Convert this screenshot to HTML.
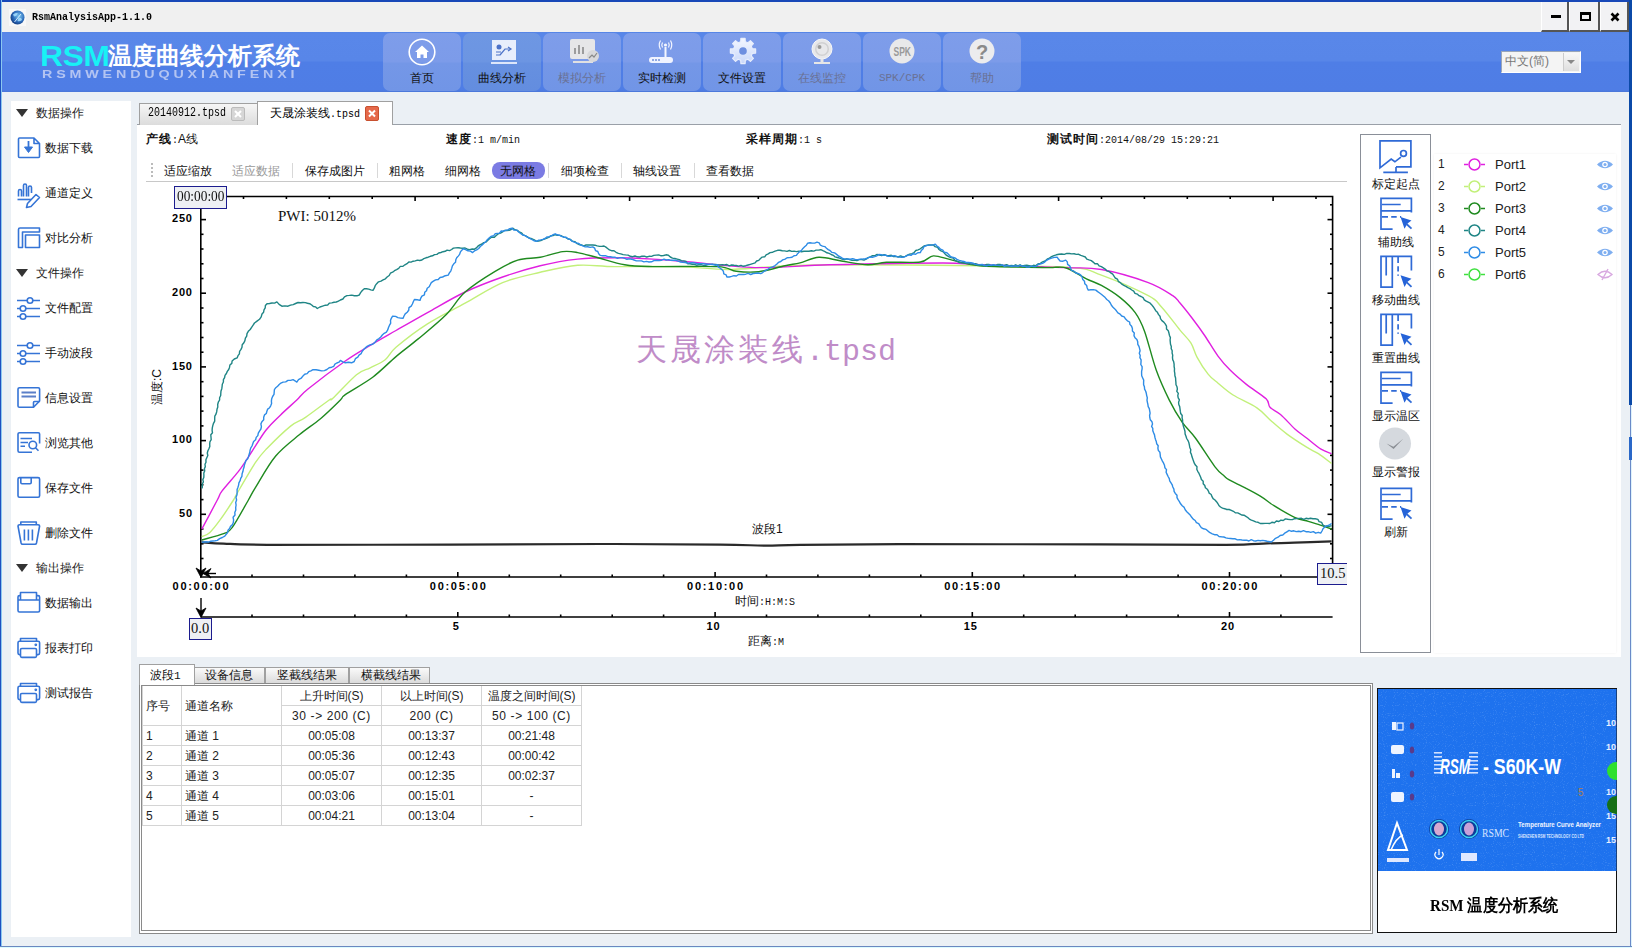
<!DOCTYPE html>
<html><head><meta charset="utf-8">
<style>
*{box-sizing:border-box}
html,body{margin:0;padding:0}
body{width:1632px;height:948px;position:relative;overflow:hidden;background:#ebf0f5;font-family:"Liberation Sans",sans-serif;color:#111}
.a{position:absolute}
.t{position:absolute;white-space:nowrap;line-height:1}
.nav{position:absolute;top:33px;width:78px;height:58px;border-radius:7px;background:linear-gradient(#7e9dea 0,#7c9be9 29px,#7497e7 30px,#7195e6 100%)}
.nav .lb{position:absolute;left:0;right:0;top:39px;text-align:center;font-size:12px;line-height:12px;color:#111}
.nav .lb.dis{color:#6a7194}
.side{position:absolute;left:45px;font-size:12px;line-height:12px;color:#111}
.sh{position:absolute;left:36px;font-size:12px;line-height:12px;color:#222}
.tri{position:absolute;left:16px;width:0;height:0;border-left:6px solid transparent;border-right:6px solid transparent;border-top:8px solid #333}
.tb{position:absolute;top:165px;font-size:12px;line-height:12px;color:#111}
.sep{position:absolute;top:163px;width:1px;height:15px;background:#d8d8d8}
.ax{font-weight:bold;font-size:11px;line-height:11px;color:#000}
.rt{position:absolute;left:1361px;width:69px;text-align:center;font-size:12px;line-height:12px;color:#111}
.pn{position:absolute;left:1438px;font-size:12px;line-height:12px;color:#222}
.pp{position:absolute;left:1495px;font-size:13px;line-height:13px;color:#222}
table.g{position:absolute;left:142px;top:685px;border-collapse:collapse;font-size:12px;color:#222}
table.g td{border:1px solid #d4d4d4;height:20px;padding:0;line-height:18px;text-align:center}
table.g td.l{text-align:left;padding-left:3px}
</style></head><body>

<!-- window frame -->
<div class="a" style="left:0;top:0;width:1632px;height:2px;background:#1848b8"></div>
<div class="a" style="left:0;top:0;width:1px;height:948px;background:#1d50c0"></div><div class="a" style="left:1px;top:0;width:1px;height:948px;background:#8cc8f0"></div>
<div class="a" style="left:1630px;top:0;width:2px;height:948px;background:#dff2fb"></div><div class="a" style="left:1630px;top:0;width:1px;height:948px;background:#6a8ac8"></div><div class="a" style="left:1629px;top:0;width:3px;height:405px;background:#0b4aa8"></div><div class="a" style="left:1629px;top:437px;width:3px;height:23px;background:#2a68c8"></div>
<div class="a" style="left:0;top:946px;width:1632px;height:2px;background:#dcfaff"></div><div class="a" style="left:0;top:946px;width:1632px;height:1px;background:#6a88c0"></div>

<!-- title bar -->
<div class="a" style="left:2px;top:2px;width:1627px;height:30px;background:#f0f0f0"></div>
<svg class="a" style="left:9px;top:9px" width="17" height="17" viewBox="0 0 17 17">
  <rect x="0" y="0" width="17" height="17" fill="#f8f8f8"/>
  <defs><radialGradient id="gl" cx="0.6" cy="0.4" r="0.7"><stop offset="0" stop-color="#7cc6f2"/><stop offset="0.6" stop-color="#2a68b8"/><stop offset="1" stop-color="#0c2f70"/></radialGradient></defs>
  <circle cx="8.5" cy="8.5" r="7" fill="url(#gl)"/>
  <path d="M4,5.5 Q6.5,3 9,4.5 Q8,7 5,7.5Z M9.5,9 Q12.5,8 13,11 Q10.5,13 8.5,12Z" fill="#a8e0ff" opacity="0.85"/>
  <path d="M5.5,13 L12,5" stroke="#e0f4ff" stroke-width="0.9"/>
</svg>
<div class="t" style="left:32px;top:12px;font-family:'Liberation Mono',monospace;font-size:10px;line-height:10px;color:#000;font-weight:bold;transform:scaleY(1.15);transform-origin:0 0">RsmAnalysisApp-1.1.0</div>
<!-- window buttons -->
<div class="a" style="left:1541px;top:2px;width:28px;height:30px;background:#f2f2f4;border-right:2px solid #555;border-bottom:2px solid #555;border-left:1px solid #fff"></div>
<div class="a" style="left:1551px;top:15px;width:10px;height:3px;background:#000"></div>
<div class="a" style="left:1569px;top:2px;width:31px;height:30px;background:#f2f2f4;border-right:2px solid #555;border-bottom:2px solid #555;border-left:1px solid #fff"></div>
<div class="a" style="left:1580px;top:12px;width:11px;height:9px;border:2px solid #000;border-top-width:3px"></div>
<div class="a" style="left:1600px;top:2px;width:29px;height:30px;background:#f2f2f4;border-right:2px solid #555;border-bottom:2px solid #555;border-left:1px solid #fff"></div>
<svg class="a" style="left:1610px;top:12px" width="10" height="10" viewBox="0 0 10 10"><path d="M1.5,1.5 L8.5,8.5 M8.5,1.5 L1.5,8.5" stroke="#000" stroke-width="2.6"/></svg>

<!-- header -->
<div class="a" style="left:2px;top:32px;width:1627px;height:60px;background:linear-gradient(#5685e6 0,#5987e9 2px,#5886e8 29px,#4f7ee6 30px,#4f7de5 58px,#4a76d8 60px)"></div>
<div class="t" style="left:40px;top:42px;font-size:29px;line-height:29px;color:#19f1f5;letter-spacing:-0.5px;font-weight:bold;transform:scaleX(1.1);transform-origin:0 0">RSM</div>
<div class="t" style="left:108px;top:44px;font-size:23.5px;line-height:24px;color:#fff;font-weight:bold">温度曲线分析系统</div>
<div class="t" style="left:42px;top:69px;font-size:11px;line-height:11px;color:#b3c4f2;font-weight:bold;letter-spacing:2.95px;transform:scaleX(1.3);transform-origin:0 0">RSMWENDUQUXIANFENXI</div>

<div class="nav" style="left:383px"><svg class="a" style="left:25px;top:5px" width="28" height="28" viewBox="0 0 28 28"><circle cx="14" cy="14" r="12.8" fill="none" stroke="#fff" stroke-width="1.6"/><path d="M7,14 L14,7.5 L21,14 L19,14 L19,20 L15.5,20 L15.5,16.5 L12.5,16.5 L12.5,20 L9,20 L9,14Z" fill="#fff"/></svg><div class="lb">首页</div></div>
<div class="nav" style="left:463px;background:linear-gradient(#6e97e3 0,#6c95e2 29px,#6690e0 30px,#638ddf 100%)"><svg class="a" style="left:28px;top:6px" width="26" height="26" viewBox="0 0 26 26"><rect x="1" y="1" width="24" height="20" fill="#e8eefc"/><rect x="0" y="23" width="26" height="2" fill="#dde6fa"/><circle cx="8" cy="8" r="2.5" fill="#4d72c8"/><path d="M5,13 L10,13 M5,16 L9,16 M9,16 L14,10 L19,10" stroke="#4d72c8" stroke-width="1.2" fill="none"/><path d="M17,8 L20,10 L17,12" stroke="#4d72c8" stroke-width="1.2" fill="none"/></svg><div class="lb">曲线分析</div></div>
<div class="nav" style="left:543px"><svg class="a" style="left:24px;top:5px" width="32" height="28" viewBox="0 0 32 28"><rect x="3" y="1" width="25" height="20" rx="2" fill="#e6e6e8"/><rect x="6" y="23" width="20" height="2" fill="#e0e0e2"/><path d="M8,16 L8,10 M12,16 L12,7 M16,16 L16,9" stroke="#8a8a8a" stroke-width="1.6"/><circle cx="26" cy="18" r="6" fill="#d8d8da"/><path d="M22,20 L25,17 L27,19 L30,15" stroke="#888" stroke-width="1.2" fill="none"/></svg><div class="lb dis">模拟分析</div></div>
<div class="nav" style="left:623px"><svg class="a" style="left:22px;top:5px" width="34" height="28" viewBox="0 0 34 28"><g transform="translate(4.5,1)"><path d="M16,8 L16,18" stroke="#f4f6ff" stroke-width="2"/><circle cx="16" cy="6" r="1.6" fill="#f4f6ff"/><path d="M13,3.5 Q11.5,6 13,8.5 M19,3.5 Q20.5,6 19,8.5 M11,1.5 Q8.5,6 11,10.5 M21,1.5 Q23.5,6 21,10.5" stroke="#f4f6ff" stroke-width="1.2" fill="none"/></g><rect x="4" y="19" width="24" height="6" rx="3" fill="#f0f3ff"/><circle cx="8" cy="22" r="1" fill="#6f8fd8"/><circle cx="11" cy="22" r="1" fill="#6f8fd8"/><circle cx="14" cy="22" r="1" fill="#6f8fd8"/></svg><div class="lb">实时检测</div></div>
<div class="nav" style="left:703px"><svg class="a" style="left:25px;top:3px" width="30" height="30" viewBox="0 0 30 30"><defs><linearGradient id="gg" x1="0" y1="0" x2="0" y2="1"><stop offset="0" stop-color="#f4f7ff"/><stop offset="1" stop-color="#c9d8fa"/></linearGradient></defs><path d="M12.90,2.37 L17.10,2.37 L17.31,5.68 L19.95,6.78 L22.44,4.59 L25.41,7.56 L23.22,10.05 L24.32,12.69 L27.63,12.90 L27.63,17.10 L24.32,17.31 L23.22,19.95 L25.41,22.44 L22.44,25.41 L19.95,23.22 L17.31,24.32 L17.10,27.63 L12.90,27.63 L12.69,24.32 L10.05,23.22 L7.56,25.41 L4.59,22.44 L6.78,19.95 L5.68,17.31 L2.37,17.10 L2.37,12.90 L5.68,12.69 L6.78,10.05 L4.59,7.56 L7.56,4.59 L10.05,6.78 L12.69,5.68Z" fill="url(#gg)" stroke="#e8eefc" stroke-width="1.2" stroke-linejoin="round"/><circle cx="15" cy="15" r="3.8" fill="#6d8fe0"/></svg><div class="lb">文件设置</div></div>
<div class="nav" style="left:783px"><svg class="a" style="left:26px;top:5px" width="26" height="28" viewBox="0 0 26 28"><circle cx="13" cy="11" r="10" fill="#e8e8ea" stroke="#f8f8f8" stroke-width="1"/><circle cx="13" cy="11" r="7" fill="#d0d0d2"/><circle cx="13" cy="11" r="5.5" fill="#e8e8ea"/><circle cx="10.5" cy="9" r="2" fill="#999"/><rect x="11.5" y="21" width="3" height="3" fill="#e6e6e6"/><rect x="5" y="24" width="16" height="2" fill="#e6e6e6"/></svg><div class="lb dis">在线监控</div></div>
<div class="nav" style="left:863px"><svg class="a" style="left:26px;top:5px" width="28" height="28" viewBox="0 0 28 28"><circle cx="13" cy="13" r="12.5" fill="#e9e9ea"/><text x="4.5" y="18" font-family="Liberation Sans" font-size="13" fill="#9a9a9a" font-weight="bold" textLength="17.5" lengthAdjust="spacingAndGlyphs">SPK</text></svg><div class="lb dis" style="font-family:'Liberation Mono',monospace;font-size:11px">SPK/CPK</div></div>
<div class="nav" style="left:943px"><svg class="a" style="left:26px;top:5px" width="28" height="28" viewBox="0 0 28 28"><circle cx="13" cy="13" r="12.5" fill="#ececee"/><text x="13" y="20.5" text-anchor="middle" font-family="Liberation Sans" font-size="20" fill="#8a8a8a" font-weight="bold">?</text></svg><div class="lb dis">帮助</div></div>

<!-- language combo -->
<div class="a" style="left:1501px;top:51px;width:80px;height:22px;background:#f4f4f4;border:1px solid #9aa6b8;border-right-color:#fff;border-bottom-color:#fff"></div>
<div class="t" style="left:1505px;top:55px;font-size:12px;line-height:12px;color:#777">中文(简)</div>
<div class="a" style="left:1563px;top:53px;width:16px;height:18px;background:linear-gradient(#f8f8f8,#dedede);border-left:1px solid #ccc"></div>
<div class="a" style="left:1567px;top:60px;width:0;height:0;border-left:4px solid transparent;border-right:4px solid transparent;border-top:4px solid #888"></div>

<!-- left sidebar -->
<div class="a" style="left:11px;top:101px;width:120px;height:836px;background:#fff"></div>
<div class="tri" style="top:109px"></div><div class="sh" style="top:107px">数据操作</div>
<div class="tri" style="top:269px"></div><div class="sh" style="top:267px">文件操作</div>
<div class="tri" style="top:564px"></div><div class="sh" style="top:562px">输出操作</div>
<svg class="a" style="left:0;top:0" width="140" height="720" viewBox="0 0 140 720" fill="none" stroke="#3574d6" stroke-width="1.6" stroke-linejoin="round">
  <path d="M18.5,139 Q18.5,138 19.5,138 L34,138 L39.5,143.5 L39.5,156.5 Q39.5,157.5 38.5,157.5 L19.5,157.5 Q18.5,157.5 18.5,156.5 Z M34,138 L34,143.5 L39.5,143.5"/>
  <path d="M28.5,141 L28.5,150" stroke-width="1.8"/><path d="M24.5,147 L28.5,152.5 L32.5,147 Z" fill="#3574d6" stroke-width="1"/>
  <path d="M18.5,196.5 L18.5,191 Q18.5,189.5 20,189.5 Q21.5,189.5 21.5,191 L21.5,196.5 M23.5,196.5 L23.5,185.5 Q23.5,184 25,184 Q26.5,184 26.5,185.5 L26.5,196.5 M28.5,196.5 L28.5,187.5 Q28.5,186 30,186 Q31.5,186 31.5,187.5 L31.5,193"/>
  <path d="M17.5,199.5 L31,199.5"/>
  <path d="M27.5,203.5 L36,194.5 L39.5,197.5 L31,206.5 L26.5,207.5 Z"/>
  <path d="M18.5,247.5 L18.5,229.5 Q18.5,228 20,228 L39.5,228 L39.5,232 L22.5,232 L22.5,247.5 Z"/>
  <path d="M25.5,235 L39.5,235 L39.5,247.5 L25.5,247.5 Z"/>
  <path d="M17,300.5 L27,300.5 M33,300.5 L40,300.5 M17,308.5 L20,308.5 M26,308.5 L40,308.5 M17,316.5 L20,316.5 M26,316.5 L40,316.5"/>
  <circle cx="30" cy="300.5" r="2.8"/><circle cx="23" cy="308.5" r="2.8"/><circle cx="23" cy="316.5" r="2.8"/>
  <path d="M17,345.5 L27,345.5 M33,345.5 L40,345.5 M17,353.5 L20,353.5 M26,353.5 L40,353.5 M17,361.5 L20,361.5 M26,361.5 L40,361.5"/>
  <circle cx="30" cy="345.5" r="2.8"/><circle cx="23" cy="353.5" r="2.8"/><circle cx="23" cy="361.5" r="2.8"/>
  <path d="M18,389 Q18,387.8 19.5,387.8 L38.3,387.8 Q39.6,387.8 39.6,389 L39.6,401 L33.5,407.3 L19.5,407.3 Q18,407.3 18,406 Z"/>
  <path d="M33.5,407.3 L33.5,402.5 Q33.5,401.5 34.5,401.5 L39.6,401.5"/>
  <path d="M21.5,392.5 L36,392.5 M21.5,396.5 L36,396.5" stroke="#5a7fc8" stroke-width="1.8"/>
  <path d="M39.6,443.5 L39.6,434 Q39.6,432.7 38.3,432.7 L19.5,432.7 Q18,432.7 18,434 L18,450.7 Q18,452.2 19.5,452.2 L32,452.2"/>
  <path d="M20.5,438.5 L32,438.5 M20.5,442.5 L28,442.5 M20.5,446.3 L25,446.3"/>
  <circle cx="32.8" cy="445" r="3.8"/><path d="M35.5,447.8 L38.5,450.8"/>
  <path d="M19.5,477.6 L38.1,477.6 Q39.6,477.6 39.6,479.1 L39.6,495.8 Q39.6,497.3 38.1,497.3 L19.5,497.3 Q18,497.3 18,495.8 L18,479.1 Q18,477.6 19.5,477.6 Z"/>
  <path d="M20.8,477.6 L20.8,482.6 Q20.8,483.8 22,483.8 L30,483.8 Q31.2,483.8 31.2,482.6 L31.2,477.6"/>
  <path d="M20.8,524.5 L20.8,522 L36.3,522 L36.3,524.5"/>
  <path d="M18,526 Q18,524.8 19.5,524.8 L38.1,524.8 Q39.6,524.8 39.6,526 L36.5,543 Q36.2,544.3 35,544.3 L22.6,544.3 Q21.4,544.3 21.1,543 Z"/>
  <path d="M24.4,529.5 L24.4,540.5 M28.4,529.5 L28.4,540.5 M32.4,529.5 L32.4,540.5"/>
  <path d="M20.5,600 L20.5,592.5 L36.5,592.5 L36.5,600"/>
  <path d="M20.5,595.6 L19.5,595.6 Q18,595.6 18,597 L18,610.5 Q18,612 19.5,612 L38.1,612 Q39.6,612 39.6,610.5 L39.6,597 Q39.6,595.6 38.1,595.6 L36.5,595.6 M18,600 L39.6,600"/>
  <path d="M20.5,641.3 L20.5,638.5 L36.5,638.5 L36.5,641.3"/>
  <path d="M20.5,654.6 L19.5,654.6 Q18,654.6 18,653 L18,642.8 Q18,641.3 19.5,641.3 L38.1,641.3 Q39.6,641.3 39.6,642.8 L39.6,653 Q39.6,654.6 38.1,654.6 L36.5,654.6"/>
  <path d="M21.8,648.5 L35.2,648.5 Q36.5,648.5 36.5,649.8 L36.5,656.1 Q36.5,657.4 35.2,657.4 L21.8,657.4 Q20.5,657.4 20.5,656.1 L20.5,649.8 Q20.5,648.5 21.8,648.5 Z"/>
  <circle cx="35.8" cy="644.8" r="0.6" fill="#3574d6"/>
  <path d="M20.5,686.3 L20.5,683.5 L36.5,683.5 L36.5,686.3"/>
  <path d="M20.5,699.6 L19.5,699.6 Q18,699.6 18,698 L18,687.8 Q18,686.3 19.5,686.3 L38.1,686.3 Q39.6,686.3 39.6,687.8 L39.6,698 Q39.6,699.6 38.1,699.6 L36.5,699.6"/>
  <path d="M21.8,693.5 L35.2,693.5 Q36.5,693.5 36.5,694.8 L36.5,701.1 Q36.5,702.4 35.2,702.4 L21.8,702.4 Q20.5,702.4 20.5,701.1 L20.5,694.8 Q20.5,693.5 21.8,693.5 Z"/>
  <circle cx="35.8" cy="689.8" r="0.6" fill="#3574d6"/>
</svg>
<div class="side" style="top:142px">数据下载</div>
<div class="side" style="top:187px">通道定义</div>
<div class="side" style="top:232px">对比分析</div>
<div class="side" style="top:302px">文件配置</div>
<div class="side" style="top:347px">手动波段</div>
<div class="side" style="top:392px">信息设置</div>
<div class="side" style="top:437px">浏览其他</div>
<div class="side" style="top:482px">保存文件</div>
<div class="side" style="top:527px">删除文件</div>
<div class="side" style="top:597px">数据输出</div>
<div class="side" style="top:642px">报表打印</div>
<div class="side" style="top:687px">测试报告</div>

<!-- file tabs -->
<div class="a" style="left:137px;top:124px;width:1484px;height:1px;background:#9aa0a8"></div>
<div class="a" style="left:139px;top:103px;width:119px;height:22px;background:linear-gradient(#f6f6f6,#dcdcdc);border:1px solid #a0a0a0;border-bottom:none"></div>
<div class="t" style="left:148px;top:108px;font-family:'Liberation Mono',monospace;font-size:10px;line-height:10px;color:#000;transform:scaleY(1.2);transform-origin:0 0">20140912.tpsd</div>
<div class="a" style="left:231px;top:107px;width:14px;height:14px;border-radius:2px;background:#d6d6d6;border:1px solid #bbb"></div>
<svg class="a" style="left:231px;top:107px" width="14" height="14"><path d="M4,4 L10,10 M10,4 L4,10" stroke="#fff" stroke-width="2"/></svg>
<div class="a" style="left:257px;top:101px;width:136px;height:25px;background:#fff;border:1px solid #a0a0a0;border-bottom:none"></div>
<div class="t" style="left:270px;top:107px;font-size:12px;line-height:12px;color:#000">天晟涂装线<span style="font-family:'Liberation Mono',monospace;font-size:10px">.tpsd</span></div>
<div class="a" style="left:365px;top:106px;width:14px;height:15px;border-radius:2px;background:#e5694a;border:1px solid #c8502f"></div>
<svg class="a" style="left:365px;top:106px" width="14" height="15"><path d="M4,4.5 L10,10.5 M10,4.5 L4,10.5" stroke="#fff" stroke-width="2"/></svg>

<!-- chart panel -->
<div class="a" style="left:137px;top:125px;width:1484px;height:532px;background:#fff"></div>
<div class="t" style="left:146px;top:133px;font-size:12px;line-height:12px"><b style="letter-spacing:1px">产线</b><span style="font-family:'Liberation Mono',monospace;font-size:10px">:</span>A线</div>
<div class="t" style="left:446px;top:133px;font-size:12px;line-height:12px"><b style="letter-spacing:1px">速度</b><span style="font-family:'Liberation Mono',monospace;font-size:10px">:1 m/min</span></div>
<div class="t" style="left:746px;top:133px;font-size:12px;line-height:12px"><b style="letter-spacing:1px">采样周期</b><span style="font-family:'Liberation Mono',monospace;font-size:10px">:1 s</span></div>
<div class="t" style="left:1047px;top:133px;font-size:12px;line-height:12px"><b style="letter-spacing:1px">测试时间</b><span style="font-family:'Liberation Mono',monospace;font-size:10px">:2014/08/29 15:29:21</span></div>

<!-- toolbar -->
<div class="a" style="left:151px;top:163px;width:2px;height:15px;background:repeating-linear-gradient(#bbb 0 2px,transparent 2px 4px)"></div>
<div class="tb" style="left:164px">适应缩放</div>
<div class="tb" style="left:232px;color:#999">适应数据</div>
<div class="sep" style="left:292px"></div>
<div class="tb" style="left:305px">保存成图片</div>
<div class="sep" style="left:377px"></div>
<div class="tb" style="left:389px">粗网格</div>
<div class="tb" style="left:445px">细网格</div>
<div class="a" style="left:492px;top:162px;width:53px;height:17px;border-radius:8px;background:#7b7be3"></div>
<div class="tb" style="left:500px">无网格</div>
<div class="sep" style="left:548px"></div>
<div class="tb" style="left:561px">细项检查</div>
<div class="sep" style="left:621px"></div>
<div class="tb" style="left:633px">轴线设置</div>
<div class="sep" style="left:694px"></div>
<div class="tb" style="left:706px">查看数据</div>
<div class="a" style="left:146px;top:181px;width:1201px;height:1px;background:#c8c8c8"></div>

<!-- chart svg -->
<svg class="a" style="left:0;top:0" width="1632" height="948" viewBox="0 0 1632 948">
  <g stroke="#000" stroke-width="1.6" fill="none">
    <path d="M200.8,196.5 L1332.6,196.5 L1332.6,577 L200.8,577 Z"/>
    <path d="M200.8,617 L1332.6,617"/>
    <line x1="252.0" y1="577" x2="252.0" y2="574.5"/>
<line x1="252.0" y1="617" x2="252.0" y2="614.5"/>
<line x1="303.5" y1="577" x2="303.5" y2="574.5"/>
<line x1="303.5" y1="617" x2="303.5" y2="614.5"/>
<line x1="354.9" y1="577" x2="354.9" y2="574.5"/>
<line x1="354.9" y1="617" x2="354.9" y2="614.5"/>
<line x1="406.4" y1="577" x2="406.4" y2="574.5"/>
<line x1="406.4" y1="617" x2="406.4" y2="614.5"/>
<line x1="457.8" y1="577" x2="457.8" y2="572"/>
<line x1="457.8" y1="617" x2="457.8" y2="612"/>
<line x1="509.3" y1="577" x2="509.3" y2="574.5"/>
<line x1="509.3" y1="617" x2="509.3" y2="614.5"/>
<line x1="560.7" y1="577" x2="560.7" y2="574.5"/>
<line x1="560.7" y1="617" x2="560.7" y2="614.5"/>
<line x1="612.2" y1="577" x2="612.2" y2="574.5"/>
<line x1="612.2" y1="617" x2="612.2" y2="614.5"/>
<line x1="663.6" y1="577" x2="663.6" y2="574.5"/>
<line x1="663.6" y1="617" x2="663.6" y2="614.5"/>
<line x1="715.1" y1="577" x2="715.1" y2="572"/>
<line x1="715.1" y1="617" x2="715.1" y2="612"/>
<line x1="766.5" y1="577" x2="766.5" y2="574.5"/>
<line x1="766.5" y1="617" x2="766.5" y2="614.5"/>
<line x1="817.9" y1="577" x2="817.9" y2="574.5"/>
<line x1="817.9" y1="617" x2="817.9" y2="614.5"/>
<line x1="869.4" y1="577" x2="869.4" y2="574.5"/>
<line x1="869.4" y1="617" x2="869.4" y2="614.5"/>
<line x1="920.8" y1="577" x2="920.8" y2="574.5"/>
<line x1="920.8" y1="617" x2="920.8" y2="614.5"/>
<line x1="972.3" y1="577" x2="972.3" y2="572"/>
<line x1="972.3" y1="617" x2="972.3" y2="612"/>
<line x1="1023.7" y1="577" x2="1023.7" y2="574.5"/>
<line x1="1023.7" y1="617" x2="1023.7" y2="614.5"/>
<line x1="1075.2" y1="577" x2="1075.2" y2="574.5"/>
<line x1="1075.2" y1="617" x2="1075.2" y2="614.5"/>
<line x1="1126.6" y1="577" x2="1126.6" y2="574.5"/>
<line x1="1126.6" y1="617" x2="1126.6" y2="614.5"/>
<line x1="1178.1" y1="577" x2="1178.1" y2="574.5"/>
<line x1="1178.1" y1="617" x2="1178.1" y2="614.5"/>
<line x1="1229.5" y1="577" x2="1229.5" y2="572"/>
<line x1="1229.5" y1="617" x2="1229.5" y2="612"/>
<line x1="1280.9" y1="577" x2="1280.9" y2="574.5"/>
<line x1="1280.9" y1="617" x2="1280.9" y2="614.5"/>
<line x1="243.5" y1="196.5" x2="243.5" y2="199.0"/>
<line x1="286.4" y1="196.5" x2="286.4" y2="199.0"/>
<line x1="329.3" y1="196.5" x2="329.3" y2="199.0"/>
<line x1="372.2" y1="196.5" x2="372.2" y2="199.0"/>
<line x1="415.1" y1="196.5" x2="415.1" y2="201.0"/>
<line x1="458.0" y1="196.5" x2="458.0" y2="199.0"/>
<line x1="500.9" y1="196.5" x2="500.9" y2="199.0"/>
<line x1="543.8" y1="196.5" x2="543.8" y2="199.0"/>
<line x1="586.7" y1="196.5" x2="586.7" y2="199.0"/>
<line x1="629.6" y1="196.5" x2="629.6" y2="201.0"/>
<line x1="672.5" y1="196.5" x2="672.5" y2="199.0"/>
<line x1="715.4" y1="196.5" x2="715.4" y2="199.0"/>
<line x1="758.3" y1="196.5" x2="758.3" y2="199.0"/>
<line x1="801.2" y1="196.5" x2="801.2" y2="199.0"/>
<line x1="844.1" y1="196.5" x2="844.1" y2="201.0"/>
<line x1="887.0" y1="196.5" x2="887.0" y2="199.0"/>
<line x1="929.9" y1="196.5" x2="929.9" y2="199.0"/>
<line x1="972.8" y1="196.5" x2="972.8" y2="199.0"/>
<line x1="1015.7" y1="196.5" x2="1015.7" y2="199.0"/>
<line x1="1058.6" y1="196.5" x2="1058.6" y2="201.0"/>
<line x1="1101.5" y1="196.5" x2="1101.5" y2="199.0"/>
<line x1="1144.4" y1="196.5" x2="1144.4" y2="199.0"/>
<line x1="1187.3" y1="196.5" x2="1187.3" y2="199.0"/>
<line x1="1230.2" y1="196.5" x2="1230.2" y2="199.0"/>
<line x1="1273.1" y1="196.5" x2="1273.1" y2="201.0"/>
<line x1="1316.0" y1="196.5" x2="1316.0" y2="199.0"/>
<line x1="201" y1="573.3" x2="203.5" y2="573.3"/>
<line x1="1332.5" y1="573.3" x2="1330.0" y2="573.3"/>
<line x1="201" y1="558.5" x2="203.5" y2="558.5"/>
<line x1="1332.5" y1="558.5" x2="1330.0" y2="558.5"/>
<line x1="201" y1="543.8" x2="203.5" y2="543.8"/>
<line x1="1332.5" y1="543.8" x2="1330.0" y2="543.8"/>
<line x1="201" y1="529.0" x2="203.5" y2="529.0"/>
<line x1="1332.5" y1="529.0" x2="1330.0" y2="529.0"/>
<line x1="201" y1="514.3" x2="206" y2="514.3"/>
<line x1="1332.5" y1="514.3" x2="1327.5" y2="514.3"/>
<line x1="201" y1="499.6" x2="203.5" y2="499.6"/>
<line x1="1332.5" y1="499.6" x2="1330.0" y2="499.6"/>
<line x1="201" y1="484.8" x2="203.5" y2="484.8"/>
<line x1="1332.5" y1="484.8" x2="1330.0" y2="484.8"/>
<line x1="201" y1="470.1" x2="203.5" y2="470.1"/>
<line x1="1332.5" y1="470.1" x2="1330.0" y2="470.1"/>
<line x1="201" y1="455.4" x2="203.5" y2="455.4"/>
<line x1="1332.5" y1="455.4" x2="1330.0" y2="455.4"/>
<line x1="201" y1="440.6" x2="206" y2="440.6"/>
<line x1="1332.5" y1="440.6" x2="1327.5" y2="440.6"/>
<line x1="201" y1="425.9" x2="203.5" y2="425.9"/>
<line x1="1332.5" y1="425.9" x2="1330.0" y2="425.9"/>
<line x1="201" y1="411.1" x2="203.5" y2="411.1"/>
<line x1="1332.5" y1="411.1" x2="1330.0" y2="411.1"/>
<line x1="201" y1="396.4" x2="203.5" y2="396.4"/>
<line x1="1332.5" y1="396.4" x2="1330.0" y2="396.4"/>
<line x1="201" y1="381.7" x2="203.5" y2="381.7"/>
<line x1="1332.5" y1="381.7" x2="1330.0" y2="381.7"/>
<line x1="201" y1="366.9" x2="206" y2="366.9"/>
<line x1="1332.5" y1="366.9" x2="1327.5" y2="366.9"/>
<line x1="201" y1="352.2" x2="203.5" y2="352.2"/>
<line x1="1332.5" y1="352.2" x2="1330.0" y2="352.2"/>
<line x1="201" y1="337.5" x2="203.5" y2="337.5"/>
<line x1="1332.5" y1="337.5" x2="1330.0" y2="337.5"/>
<line x1="201" y1="322.7" x2="203.5" y2="322.7"/>
<line x1="1332.5" y1="322.7" x2="1330.0" y2="322.7"/>
<line x1="201" y1="308.0" x2="203.5" y2="308.0"/>
<line x1="1332.5" y1="308.0" x2="1330.0" y2="308.0"/>
<line x1="201" y1="293.2" x2="206" y2="293.2"/>
<line x1="1332.5" y1="293.2" x2="1327.5" y2="293.2"/>
<line x1="201" y1="278.5" x2="203.5" y2="278.5"/>
<line x1="1332.5" y1="278.5" x2="1330.0" y2="278.5"/>
<line x1="201" y1="263.8" x2="203.5" y2="263.8"/>
<line x1="1332.5" y1="263.8" x2="1330.0" y2="263.8"/>
<line x1="201" y1="249.0" x2="203.5" y2="249.0"/>
<line x1="1332.5" y1="249.0" x2="1330.0" y2="249.0"/>
<line x1="201" y1="234.3" x2="203.5" y2="234.3"/>
<line x1="1332.5" y1="234.3" x2="1330.0" y2="234.3"/>
<line x1="201" y1="219.6" x2="206" y2="219.6"/>
<line x1="1332.5" y1="219.6" x2="1327.5" y2="219.6"/>
<line x1="201" y1="204.8" x2="203.5" y2="204.8"/>
<line x1="1332.5" y1="204.8" x2="1330.0" y2="204.8"/>
  </g>
  <g fill="none" stroke-width="1.4" stroke-linejoin="round">
    <path d="M201.8,542.3 C205.4,542.5 212.7,543.2 223.6,543.6 C234.5,544.0 229.3,544.6 267.0,544.8 C304.7,545.0 394.5,544.7 450.0,544.6 C505.5,544.5 555.0,544.0 600.0,544.0 C645.0,544.0 692.3,544.3 720.0,544.6 C747.7,544.9 752.7,545.6 766.0,545.6 C779.3,545.6 777.7,545.0 800.0,544.8 C822.3,544.6 850.0,544.3 900.0,544.2 C950.0,544.1 1045.7,544.3 1100.0,544.4 C1154.3,544.5 1198.1,545.0 1226.0,544.8 C1253.9,544.6 1255.8,543.8 1267.2,543.4 C1278.6,543.0 1283.9,543.1 1294.6,542.7 C1305.3,542.4 1325.4,541.5 1331.6,541.3" stroke="#2a2a2a" stroke-width="2.2"/>
    <path d="M201.8,536.7 C203.2,536.0 206.7,535.4 209.9,532.4 C213.1,529.4 217.1,524.1 221.0,518.7 C224.9,513.3 230.8,504.2 233.5,500.0 C236.2,495.8 233.4,499.6 237.1,493.3 C240.8,487.0 250.7,469.7 255.7,462.2 C260.7,454.7 261.1,454.5 266.9,448.5 C272.7,442.5 284.2,431.3 290.6,426.1 C297.0,420.9 299.1,421.8 305.5,417.4 C311.9,413.0 324.6,403.2 329.2,400.0 C333.8,396.8 328.3,402.5 332.9,398.3 C337.4,394.1 350.3,379.8 356.5,374.7 C362.7,369.6 365.4,370.3 370.2,367.8 C375.0,365.3 380.9,363.1 385.2,359.7 C389.5,356.3 388.9,353.3 396.0,347.3 C403.1,341.3 416.0,331.2 427.5,323.9 C439.0,316.5 452.6,310.1 465.1,303.2 C477.6,296.3 490.1,287.8 502.6,282.6 C515.1,277.5 527.7,275.2 540.2,272.3 C552.7,269.4 565.2,266.2 577.7,265.3 C590.2,264.4 598.2,266.4 615.3,266.6 C632.3,266.8 661.4,266.1 680.0,266.6 C698.6,267.1 711.3,269.5 727.0,269.5 C742.7,269.5 756.8,267.4 774.0,266.6 C791.2,265.8 795.7,265.0 830.0,264.8 C864.3,264.6 939.8,265.2 980.0,265.7 C1020.2,266.2 1051.2,266.0 1071.4,267.6 C1091.6,269.2 1088.6,270.4 1101.4,275.1 C1114.2,279.8 1138.3,290.4 1148.3,295.7 C1158.3,301.0 1156.2,301.3 1161.5,307.0 C1166.8,312.7 1175.1,324.1 1180.0,330.1 C1184.9,336.1 1188.2,338.6 1191.0,343.1 C1193.8,347.6 1194.2,351.9 1197.0,357.1 C1199.8,362.3 1204.6,369.8 1208.1,374.1 C1211.6,378.5 1213.9,379.7 1218.1,383.2 C1222.3,386.7 1226.6,390.9 1233.1,395.0 C1239.6,399.1 1250.5,403.6 1256.9,407.9 C1263.3,412.2 1266.3,416.6 1271.3,421.0 C1276.3,425.4 1281.1,429.7 1287.0,434.1 C1292.9,438.5 1301.4,443.9 1306.6,447.2 C1311.8,450.5 1314.2,451.0 1318.4,453.7 C1322.6,456.4 1329.3,461.9 1331.5,463.5" stroke="#c2f07a"/>
    <path d="M201.8,529.2 C204.4,524.3 213.9,506.4 217.3,500.0 C220.7,493.6 218.6,495.6 222.1,490.9 C225.6,486.2 233.9,477.2 238.3,471.6 C242.7,466.0 243.7,464.1 248.3,457.2 C252.9,450.3 260.3,437.6 265.7,430.5 C271.1,423.4 275.4,420.0 280.6,414.9 C285.8,409.8 292.2,404.3 296.8,400.0 C301.4,395.7 299.9,395.5 308.0,389.0 C316.1,382.5 334.9,368.3 345.3,361.0 C355.7,353.7 361.8,350.5 370.2,345.4 C378.6,340.3 386.4,336.0 396.0,330.5 C405.6,325.0 416.0,319.0 427.5,312.6 C439.0,306.2 452.6,297.9 465.1,292.0 C477.6,286.1 490.1,281.4 502.6,277.0 C515.1,272.6 527.7,268.7 540.2,265.7 C552.7,262.7 565.2,260.4 577.7,259.1 C590.2,257.8 602.8,257.8 615.3,257.8 C627.8,257.8 640.3,258.4 652.8,259.1 C665.2,259.8 673.0,260.6 690.0,262.0 C707.0,263.4 731.7,267.1 755.0,267.6 C778.3,268.1 798.7,265.6 830.0,264.8 C861.3,264.0 918.0,263.0 943.0,263.0 C968.0,263.0 959.9,264.0 980.0,264.8 C1000.1,265.6 1043.7,266.8 1063.9,267.6 C1084.1,268.4 1087.3,267.0 1101.4,269.5 C1115.5,272.0 1136.4,278.2 1148.3,282.6 C1160.2,287.0 1167.4,292.3 1172.7,295.7 C1178.0,299.1 1176.8,299.3 1180.0,303.0 C1183.2,306.7 1187.8,312.5 1192.0,318.0 C1196.2,323.5 1200.7,329.6 1205.0,336.0 C1209.3,342.4 1213.8,350.4 1218.0,356.1 C1222.2,361.8 1225.4,365.4 1230.1,370.1 C1234.8,374.8 1240.4,379.6 1246.4,384.4 C1252.4,389.2 1262.2,395.0 1266.1,398.8 C1270.0,402.6 1267.6,404.7 1270.0,407.3 C1272.4,409.9 1276.3,410.9 1280.5,414.5 C1284.7,418.1 1290.6,425.0 1294.9,428.9 C1299.2,432.8 1302.2,434.6 1306.6,438.0 C1310.9,441.4 1316.8,446.6 1321.0,449.2 C1325.2,451.8 1329.8,452.9 1331.5,453.7" stroke="#e020e0"/>
    <path d="M201.8,540.0 C205.4,538.9 218.5,535.7 223.6,533.6 C228.7,531.5 228.2,533.0 232.3,527.4 C236.4,521.8 244.5,506.7 248.4,500.0 C252.3,493.3 251.1,494.4 255.7,487.1 C260.2,479.8 268.4,464.7 275.7,456.0 C283.0,447.3 291.8,441.0 299.3,434.8 C306.8,428.6 313.6,424.5 320.5,418.7 C327.4,412.9 336.3,404.0 340.4,400.0 C344.5,396.0 339.9,398.4 345.3,394.6 C350.7,390.8 364.2,383.5 372.7,377.2 C381.1,370.9 388.4,363.0 396.0,356.6 C403.6,350.2 409.8,345.9 418.2,338.9 C426.6,331.9 438.5,322.3 446.3,314.5 C454.1,306.7 457.0,299.2 465.1,292.0 C473.2,284.8 486.3,276.6 495.1,271.3 C503.9,266.0 510.2,262.4 517.7,260.1 C525.2,257.8 532.7,258.7 540.2,257.3 C547.7,255.9 556.5,252.4 562.7,251.6 C569.0,250.8 572.1,251.6 577.7,252.6 C583.3,253.6 588.7,255.3 596.5,257.3 C604.3,259.3 615.3,263.2 624.7,264.8 C634.1,266.4 637.3,266.3 652.8,266.6 C668.3,266.9 703.6,265.8 717.5,266.6 C731.4,267.4 729.4,270.5 736.3,271.3 C743.2,272.1 750.7,272.6 758.8,271.7 C766.9,270.8 778.2,267.2 785.1,265.7 C792.0,264.2 794.5,264.3 800.1,262.9 C805.7,261.5 812.0,257.6 818.9,257.3 C825.8,257.0 833.3,259.8 841.4,261.0 C849.5,262.2 860.2,264.6 867.7,264.8 C875.2,265.0 877.7,262.8 886.5,262.3 C895.3,261.8 912.5,263.1 920.3,262.0 C928.1,260.9 928.1,256.2 933.4,255.9 C938.7,255.6 944.4,258.5 952.2,260.1 C960.0,261.7 964.5,264.4 980.0,265.7 C995.5,266.9 1032.4,267.4 1045.1,267.6 C1057.8,267.9 1052.7,267.1 1056.4,267.2 C1060.2,267.3 1062.6,266.6 1067.6,268.5 C1072.6,270.4 1080.8,276.0 1086.4,278.8 C1092.0,281.6 1095.8,282.3 1101.4,285.4 C1107.0,288.5 1114.6,293.1 1120.2,297.6 C1125.8,302.1 1131.1,307.0 1135.2,312.6 C1139.3,318.2 1141.1,321.8 1144.6,331.4 C1148.1,341.0 1152.1,358.6 1156.2,370.0 C1160.3,381.4 1165.0,391.4 1169.3,400.1 C1173.6,408.8 1177.9,416.0 1182.3,422.3 C1186.7,428.6 1190.0,430.6 1195.4,438.0 C1200.9,445.4 1210.2,460.5 1215.0,466.8 C1219.8,473.1 1221.9,473.9 1224.2,476.0 C1226.5,478.1 1226.2,478.1 1228.8,479.6 C1231.4,481.1 1234.5,482.4 1239.7,485.1 C1245.0,487.9 1254.6,492.7 1260.3,496.1 C1266.0,499.5 1268.3,502.2 1274.0,505.7 C1279.7,509.2 1288.9,514.7 1294.6,517.3 C1300.3,519.9 1303.7,520.0 1308.3,521.4 C1312.9,522.8 1318.1,524.3 1322.0,525.6 C1325.9,526.9 1330.0,528.4 1331.6,529.0" stroke="#1f8a1f"/>
    <path d="M202.2,488.4 L202.3,486.2 L202.3,484.0 L203.4,481.9 L202.8,479.6 L203.8,477.5 L203.9,475.3 L203.8,473.0 L204.7,470.9 L204.4,468.7 L205.3,466.6 L205.0,464.3 L206.0,462.2 L205.9,459.8 L206.8,457.7 L207.8,455.5 L207.3,453.0 L207.9,450.8 L208.9,448.7 L209.8,446.5 L209.7,444.1 L209.9,441.8 L211.2,439.7 L211.0,437.3 L210.8,434.8 L212.5,432.8 L212.1,430.3 L212.3,427.9 L212.8,425.6 L213.5,423.3 L214.7,421.1 L214.7,418.7 L214.8,416.2 L216.0,414.1 L216.7,411.7 L217.0,409.3 L217.8,407.0 L217.7,404.5 L218.3,402.2 L219.6,400.0 L219.6,397.7 L220.7,395.5 L220.8,393.2 L221.0,390.9 L221.8,388.7 L222.1,386.5 L222.3,384.2 L223.4,382.0 L223.4,379.7 L224.6,377.7 L225.0,375.4 L226.4,373.5 L227.3,371.4 L228.7,369.5 L229.5,367.4 L229.9,365.0 L231.8,363.4 L232.1,361.0 L234.3,359.0 L237.1,357.9 L238.0,355.7 L239.4,353.8 L239.6,351.3 L241.0,349.4 L242.0,347.3 L242.2,344.8 L243.9,342.8 L244.9,340.6 L245.4,338.2 L246.7,336.1 L247.0,333.6 L248.3,331.3 L250.2,329.5 L251.6,327.3 L253.1,325.2 L254.5,323.0 L257.0,321.1 L259.5,319.3 L261.2,316.9 L262.0,314.0 L263.6,312.2 L264.0,309.9 L265.2,307.9 L265.4,305.5 L267.0,303.7 L269.5,303.5 L272.0,303.0 L274.6,303.1 L276.9,301.9 L279.1,304.4 L281.9,306.2 L284.9,305.9 L288.0,306.2 L290.5,305.1 L293.2,304.6 L295.6,303.5 L298.0,302.5 L300.5,302.8 L303.0,302.5 L305.3,302.6 L307.5,303.2 L309.7,303.7 L311.7,305.0 L313.4,306.5 L315.7,306.9 L317.3,308.5 L319.9,307.0 L322.6,306.1 L325.4,305.2 L327.7,305.0 L329.5,303.1 L331.8,302.9 L334.0,302.3 L336.3,302.0 L338.4,301.2 L340.4,300.0 L342.9,299.0 L344.5,296.8 L346.9,295.6 L349.4,295.4 L351.8,295.1 L354.4,295.8 L356.9,295.8 L359.3,295.0 L360.6,292.6 L362.3,290.5 L364.3,288.7 L366.5,288.7 L368.7,289.1 L370.8,289.9 L373.0,290.3 L374.3,288.2 L375.2,285.7 L376.7,283.7 L378.5,281.8 L381.0,281.1 L383.1,279.9 L385.4,278.8 L387.1,277.0 L389.2,275.5 L390.4,273.2 L392.6,272.2 L394.5,270.7 L396.6,269.6 L398.7,268.4 L400.3,266.4 L403.0,266.2 L404.9,264.8 L407.0,263.7 L408.8,262.0 L411.1,262.1 L413.1,261.2 L415.3,260.9 L417.4,260.1 L419.7,260.5 L421.9,260.0 L423.8,258.6 L426.0,257.8 L428.2,257.2 L430.3,256.3 L432.5,255.8 L434.5,254.6 L436.9,254.4 L438.7,253.0 L440.9,252.5 L443.0,251.7 L445.2,251.3 L447.1,250.1 L449.6,250.6 L451.6,249.5 L453.4,248.1 L455.7,247.9 L458.1,247.7 L460.4,248.0 L462.8,248.2 L465.1,248.0 L467.4,249.2 L469.7,249.6 L472.2,249.0 L474.5,249.2 L476.4,247.9 L477.9,246.2 L479.8,244.9 L481.9,244.0 L483.7,242.6 L486.0,242.1 L487.6,240.4 L489.5,238.7 L491.5,237.3 L494.4,237.3 L496.2,235.6 L498.1,233.9 L500.5,233.2 L502.6,231.9 L504.4,230.5 L506.8,230.5 L509.1,230.4 L511.1,229.5 L513.0,228.2 L514.9,229.7 L517.3,230.4 L519.2,231.8 L521.4,232.8 L523.0,234.8 L525.2,235.7 L527.4,236.9 L529.5,238.3 L532.0,238.8 L534.3,239.8 L536.4,241.3 L538.6,241.0 L540.8,240.5 L542.8,239.6 L544.9,238.8 L547.0,238.1 L549.1,237.2 L550.9,235.8 L553.1,235.5 L555.2,234.7 L557.4,235.2 L559.7,235.4 L561.8,236.0 L563.9,237.1 L566.0,237.7 L568.0,239.0 L570.2,239.4 L572.2,241.1 L574.8,241.6 L576.7,243.3 L578.9,244.5 L581.5,245.0 L583.7,245.8 L586.0,245.0 L588.3,244.9 L590.5,245.0 L592.8,245.0 L595.0,245.2 L597.2,245.9 L599.5,246.4 L601.7,246.4 L604.0,246.0 L605.9,247.1 L607.6,248.5 L609.4,249.9 L611.5,250.7 L614.0,250.8 L616.1,252.3 L618.4,253.4 L620.8,253.9 L623.1,254.6 L625.6,254.9 L628.1,255.1 L630.3,256.3 L632.6,256.7 L635.0,256.0 L637.3,256.8 L639.6,257.0 L642.0,256.1 L644.3,256.2 L646.7,257.0 L649.0,256.3 L651.5,256.4 L653.8,255.4 L656.2,255.1 L658.7,254.9 L661.2,255.8 L663.6,255.5 L666.0,254.8 L668.4,255.2 L670.3,257.0 L672.5,258.1 L674.9,258.5 L677.2,259.1 L679.4,259.7 L681.4,260.7 L683.8,260.9 L686.0,261.5 L687.6,263.7 L690.0,263.8 L692.2,264.3 L694.4,264.3 L696.5,265.2 L698.8,264.8 L701.1,264.7 L703.5,265.4 L705.8,265.3 L708.1,264.4 L710.5,264.4 L712.8,264.5 L715.2,264.4 L717.5,264.8 L719.8,265.0 L722.2,264.6 L724.6,264.9 L726.9,264.5 L729.2,265.8 L731.6,265.0 L734.0,265.3 L736.3,265.5 L738.6,266.1 L741.0,265.4 L743.3,266.3 L745.7,265.7 L748.1,265.0 L750.4,264.3 L752.8,263.6 L755.1,262.9 L756.6,261.0 L758.8,260.3 L760.5,258.6 L762.2,257.1 L764.7,256.8 L766.1,254.8 L768.2,253.9 L770.1,252.6 L772.7,252.2 L775.1,251.1 L777.6,250.3 L780.0,250.2 L782.3,250.7 L784.6,250.9 L787.0,251.4 L789.4,250.5 L791.7,251.4 L794.1,251.1 L796.4,251.6 L798.9,251.1 L801.4,251.7 L803.9,251.2 L806.4,251.1 L808.9,251.2 L811.4,250.7 L813.8,251.1 L816.1,250.1 L818.5,250.1 L820.8,249.7 L822.9,250.7 L825.0,251.6 L826.9,252.8 L829.2,253.4 L831.2,254.5 L833.3,255.3 L835.1,256.9 L837.4,257.5 L839.6,258.2 L842.0,259.1 L844.5,259.5 L847.1,258.8 L849.6,259.6 L852.0,260.4 L854.6,260.1 L857.0,260.6 L859.3,259.6 L861.6,259.5 L864.0,260.1 L866.1,259.1 L868.1,257.6 L870.4,256.9 L872.5,255.7 L875.0,255.6 L877.1,254.4 L879.4,255.1 L881.7,255.5 L884.2,254.6 L886.5,255.7 L888.8,255.8 L891.3,255.3 L893.5,256.6 L895.9,256.3 L898.2,257.0 L900.6,255.9 L902.9,257.0 L905.3,256.3 L907.4,255.1 L909.6,254.1 L912.1,253.7 L914.1,252.5 L915.8,250.5 L918.1,249.8 L920.3,248.8 L922.2,247.4 L924.0,246.0 L926.3,245.5 L928.7,245.0 L931.0,245.0 L933.4,245.0 L935.1,246.7 L937.6,247.4 L939.0,249.5 L941.0,250.9 L943.3,251.9 L944.9,253.7 L946.6,255.4 L948.7,256.6 L950.9,257.6 L953.3,258.0 L954.8,260.3 L957.1,261.1 L959.1,262.5 L961.6,262.9 L964.0,262.5 L966.2,263.0 L968.6,262.9 L970.8,264.3 L973.1,263.7 L975.5,263.8 L977.7,264.4 L980.0,264.8 L982.2,265.5 L984.4,265.4 L986.7,264.5 L988.9,264.4 L991.1,265.6 L993.4,265.1 L995.6,265.4 L997.8,264.5 L1000.1,264.5 L1002.3,265.4 L1004.5,265.1 L1006.7,264.6 L1009.0,265.9 L1011.2,265.5 L1013.4,265.8 L1015.7,264.8 L1017.9,265.9 L1020.1,264.8 L1022.3,266.0 L1024.6,265.5 L1026.8,265.3 L1029.0,265.7 L1031.2,266.3 L1033.5,265.3 L1035.7,265.7 L1037.8,264.0 L1040.4,263.4 L1042.6,261.8 L1045.1,261.0 L1047.1,259.2 L1049.4,258.1 L1051.6,256.7 L1053.9,255.6 L1056.4,254.8 L1059.0,254.3 L1061.6,254.0 L1064.3,254.4 L1066.8,253.4 L1069.5,253.5 L1071.8,253.9 L1074.1,253.8 L1076.3,254.4 L1078.7,254.3 L1080.8,255.4 L1083.0,256.2 L1085.3,257.0 L1086.8,259.1 L1089.0,259.9 L1091.3,260.6 L1093.2,262.1 L1094.9,263.8 L1097.6,263.8 L1099.1,265.9 L1101.4,266.6 L1103.3,267.8 L1105.2,269.1 L1106.8,270.8 L1109.0,271.5 L1110.8,272.9 L1112.7,274.2 L1114.0,276.1 L1115.2,278.0 L1117.4,279.1 L1118.3,281.3 L1120.2,282.6 L1121.9,284.2 L1123.8,285.4 L1125.9,286.4 L1127.9,287.7 L1130.0,288.6 L1131.8,290.0 L1133.7,291.2 L1135.0,293.4 L1137.3,294.1 L1139.0,295.7 L1141.1,296.5 L1143.1,297.7 L1144.3,299.9 L1146.2,301.2 L1148.2,302.2 L1150.2,303.2 L1151.8,304.9 L1153.2,306.7 L1154.5,308.7 L1155.7,310.7 L1157.4,312.3 L1158.4,314.4 L1160.0,316.2 L1160.5,318.7 L1161.9,320.6 L1163.8,322.1 L1165.2,323.9 L1166.5,326.1 L1166.5,328.9 L1168.3,330.8 L1169.0,333.3 L1169.5,335.5 L1170.4,337.6 L1170.1,339.9 L1170.3,342.1 L1170.5,344.3 L1171.3,346.4 L1171.2,348.6 L1172.2,350.7 L1172.1,353.0 L1172.7,355.1 L1172.5,357.4 L1172.7,359.6 L1173.7,361.8 L1174.1,364.1 L1174.1,366.5 L1174.5,368.7 L1174.4,371.1 L1174.8,373.4 L1174.9,375.8 L1175.6,378.0 L1175.7,380.2 L1175.9,382.4 L1176.0,384.7 L1177.0,386.8 L1177.4,389.0 L1176.8,391.3 L1178.3,393.3 L1177.8,395.6 L1178.2,397.8 L1179.4,399.9 L1178.6,402.3 L1178.8,404.5 L1179.7,406.6 L1180.0,408.9 L1180.3,411.2 L1180.7,413.5 L1182.2,415.5 L1182.1,417.9 L1182.6,420.2 L1182.6,422.6 L1183.1,424.8 L1183.6,427.1 L1184.4,429.3 L1185.0,431.5 L1185.1,434.0 L1186.0,436.2 L1186.7,438.5 L1188.0,440.6 L1188.9,442.8 L1189.4,445.1 L1189.8,447.5 L1190.8,449.7 L1190.4,452.3 L1191.4,454.4 L1192.0,456.8 L1192.8,459.0 L1193.5,461.1 L1194.3,463.2 L1195.4,465.1 L1197.0,466.8 L1196.8,469.3 L1197.7,471.3 L1198.9,473.2 L1199.8,475.3 L1200.7,477.3 L1201.4,479.5 L1203.2,481.2 L1203.2,483.7 L1204.8,485.5 L1205.4,487.8 L1207.3,489.2 L1208.4,491.1 L1209.2,493.2 L1211.2,494.5 L1212.0,496.7 L1213.1,498.7 L1215.0,500.0 L1216.5,501.7 L1217.8,503.5 L1218.9,505.4 L1220.5,507.0 L1222.5,508.1 L1224.7,508.7 L1226.8,509.5 L1229.2,509.5 L1231.3,510.3 L1233.4,511.3 L1235.3,512.7 L1237.7,512.9 L1239.7,513.9 L1241.6,515.0 L1244.0,515.2 L1245.9,516.3 L1247.7,517.5 L1249.4,519.1 L1251.4,520.1 L1253.5,520.8 L1255.7,521.9 L1258.1,522.3 L1260.3,523.5 L1262.7,523.5 L1265.1,523.4 L1267.5,523.4 L1269.9,523.5 L1271.9,522.3 L1274.5,522.7 L1276.4,521.0 L1278.9,521.5 L1280.9,520.1 L1283.2,520.5 L1285.4,518.9 L1287.7,519.3 L1290.1,519.6 L1292.4,519.6 L1294.6,518.7 L1296.9,518.6 L1299.2,518.4 L1301.5,518.3 L1303.8,519.4 L1306.0,518.3 L1308.3,518.8 L1310.6,518.2 L1312.9,518.7 L1315.2,518.7 L1317.9,519.4 L1319.1,521.6 L1321.7,522.4 L1322.7,524.8 L1324.8,526.2 L1327.1,526.0 L1329.4,526.4 L1331.6,525.6" stroke="#1f8585"/>
    <path d="M201.8,542.3 L204.0,542.0 L206.2,541.8 L208.5,542.1 L210.7,541.2 L212.9,541.0 L215.1,540.8 L217.3,540.4 L219.6,538.6 L222.3,537.5 L224.8,536.1 L226.2,534.3 L227.7,532.6 L228.0,530.2 L229.6,528.5 L230.5,526.4 L232.3,524.9 L233.3,522.5 L233.6,520.0 L233.1,517.3 L235.0,515.0 L234.8,512.4 L235.8,510.0 L235.7,507.5 L236.1,505.0 L235.7,502.4 L236.6,500.0 L236.0,497.3 L237.0,494.7 L237.1,492.1 L237.1,489.6 L237.9,487.4 L238.6,485.1 L238.9,482.8 L240.1,480.7 L240.7,478.4 L241.9,476.3 L242.1,473.8 L242.9,471.6 L243.3,469.3 L244.1,467.0 L244.5,464.7 L245.3,462.6 L245.9,460.4 L247.7,458.7 L248.5,456.7 L249.1,454.5 L249.8,452.3 L250.1,450.1 L250.8,447.9 L252.0,446.0 L252.8,443.7 L253.6,441.5 L255.6,439.8 L256.2,437.4 L257.8,435.6 L258.3,433.2 L259.5,431.1 L260.9,429.0 L261.4,426.6 L260.9,423.9 L261.9,421.7 L263.7,419.7 L263.7,417.2 L264.5,414.9 L266.3,413.5 L266.9,411.2 L267.7,409.1 L269.6,407.7 L270.7,405.8 L271.6,403.6 L271.4,401.1 L271.7,398.7 L272.6,396.5 L274.0,394.4 L274.2,392.0 L274.4,389.6 L275.8,387.7 L277.6,386.3 L279.2,384.6 L280.9,383.1 L283.1,382.1 L285.7,381.9 L288.0,380.4 L290.6,380.4 L293.1,379.7 L295.0,380.8 L296.8,382.1 L298.5,379.7 L301.2,378.2 L303.0,375.9 L304.7,374.2 L307.1,373.6 L308.7,371.7 L310.9,370.8 L313.0,369.7 L316.0,369.7 L318.8,370.2 L321.7,370.9 L324.4,370.6 L326.9,369.5 L329.1,367.8 L331.7,367.2 L333.8,366.3 L334.9,364.1 L336.8,363.0 L339.0,362.2 L340.4,360.4 L342.8,361.8 L345.3,362.8 L348.5,362.2 L351.6,362.8 L354.2,361.5 L355.4,358.7 L357.8,357.2 L359.0,355.1 L361.1,353.7 L362.1,351.5 L363.6,349.6 L365.3,347.9 L367.5,346.1 L370.0,344.9 L372.7,344.2 L374.9,342.4 L376.6,340.2 L379.0,338.6 L380.8,337.0 L382.3,335.0 L384.2,333.3 L386.4,332.1 L387.7,329.9 L388.5,327.6 L389.4,325.4 L390.7,323.2 L390.5,320.6 L391.3,318.3 L392.6,316.2 L395.6,316.4 L397.9,317.6 L400.5,318.1 L403.1,318.3 L404.0,316.0 L405.2,313.9 L407.2,312.2 L408.7,310.3 L409.0,307.6 L411.2,306.1 L412.4,304.0 L413.3,301.7 L414.4,299.5 L417.2,299.8 L420.0,300.4 L420.8,298.1 L421.9,296.1 L424.4,294.8 L424.7,292.3 L426.5,290.7 L427.2,288.3 L429.2,286.8 L430.2,284.7 L431.3,282.6 L433.4,281.2 L435.6,279.9 L438.2,279.5 L440.1,277.5 L442.6,277.0 L445.3,275.7 L448.2,275.1 L449.4,272.9 L450.9,270.8 L451.7,268.4 L452.4,265.9 L453.8,263.8 L455.5,262.3 L455.8,259.8 L456.7,257.8 L458.2,256.1 L459.6,254.4 L460.3,252.2 L461.6,250.4 L463.2,248.8 L465.6,249.6 L467.9,250.8 L470.5,251.1 L472.6,252.6 L474.4,250.9 L476.7,249.9 L478.7,248.5 L480.3,246.5 L482.2,245.0 L483.9,243.2 L485.8,241.7 L487.3,239.7 L489.1,238.0 L490.9,236.4 L493.6,235.8 L495.1,233.8 L497.3,233.4 L499.5,233.1 L501.2,231.0 L503.6,231.2 L505.7,230.3 L507.9,229.9 L509.8,228.6 L512.0,228.2 L513.8,230.1 L516.7,230.1 L518.6,232.0 L520.6,233.5 L522.7,235.0 L525.2,235.7 L527.3,237.1 L529.5,238.2 L531.7,239.5 L533.9,240.7 L536.4,241.3 L538.4,240.3 L540.7,239.9 L542.9,239.4 L545.0,238.5 L546.8,237.0 L549.1,236.7 L551.2,236.0 L553.2,234.7 L555.2,233.8 L557.3,234.8 L559.5,235.2 L561.6,236.3 L563.7,237.2 L566.1,237.2 L568.0,238.8 L570.2,239.4 L572.0,241.1 L574.2,242.1 L576.5,242.9 L578.8,243.5 L580.8,245.1 L583.0,245.9 L585.2,246.9 L587.7,246.8 L590.2,247.4 L592.7,246.9 L594.7,248.2 L595.5,250.6 L597.8,251.5 L598.7,253.8 L600.3,255.4 L602.8,255.7 L605.4,255.6 L607.8,256.6 L610.3,256.7 L612.8,257.2 L615.3,257.3 L617.5,258.3 L620.0,257.6 L622.4,257.6 L624.7,258.4 L626.9,259.3 L629.4,258.9 L631.7,259.2 L634.0,260.0 L636.4,260.9 L639.0,260.9 L641.5,260.9 L643.9,261.9 L646.5,261.4 L649.0,262.0 L651.5,261.8 L653.9,260.6 L656.5,260.4 L659.1,260.5 L661.6,260.2 L664.0,259.1 L666.3,260.0 L668.8,259.6 L671.1,260.3 L673.5,260.2 L675.9,260.3 L678.2,261.2 L680.5,262.0 L682.8,262.4 L685.2,262.5 L687.5,263.2 L690.0,262.9 L692.2,262.8 L694.5,262.9 L696.6,263.5 L698.8,263.8 L701.2,263.6 L703.5,263.6 L705.8,264.0 L708.1,264.5 L710.5,264.4 L712.8,264.3 L715.1,265.2 L717.5,264.8 L718.3,267.0 L720.2,268.2 L722.0,269.6 L723.4,271.3 L723.8,273.9 L726.1,274.8 L726.9,277.0 L729.3,277.0 L731.6,276.4 L733.9,275.7 L736.4,276.0 L738.5,274.5 L740.9,274.4 L743.3,274.5 L745.7,274.2 L748.2,273.4 L750.7,274.5 L753.2,273.5 L755.7,273.3 L758.2,273.0 L760.7,273.6 L762.7,272.6 L764.4,271.1 L766.4,270.2 L768.3,269.0 L770.1,267.6 L772.5,266.8 L774.7,265.8 L776.7,264.2 L778.4,262.4 L780.8,261.5 L782.7,259.9 L785.1,259.1 L787.1,257.7 L789.6,257.6 L792.0,257.2 L794.0,255.7 L796.4,255.4 L797.8,253.4 L799.5,251.8 L801.5,250.4 L802.9,248.4 L804.6,246.8 L806.4,245.2 L807.7,243.2 L810.0,242.8 L812.4,243.1 L814.7,243.1 L817.0,242.2 L819.2,242.9 L820.4,245.2 L822.5,246.1 L824.8,246.6 L826.5,248.2 L828.2,249.6 L830.2,250.7 L832.0,252.4 L834.6,252.9 L836.6,254.4 L838.5,256.0 L840.7,257.1 L842.7,258.5 L845.2,259.1 L847.7,259.0 L850.2,259.3 L852.7,258.7 L855.2,259.4 L857.7,259.6 L860.2,259.1 L862.7,259.0 L865.2,258.8 L867.7,258.2 L869.8,257.0 L872.4,257.2 L874.7,256.6 L877.0,255.8 L879.0,254.4 L881.2,254.7 L883.4,255.4 L885.8,255.0 L887.9,256.2 L890.2,256.4 L892.5,255.9 L894.8,255.8 L897.0,256.6 L899.2,257.1 L901.5,257.3 L903.9,257.1 L906.2,256.1 L908.4,254.9 L911.0,255.4 L913.1,253.7 L915.7,254.2 L917.8,252.7 L920.3,252.6 L921.3,250.5 L923.1,248.8 L924.0,246.6 L926.1,245.6 L928.4,245.1 L930.8,245.1 L933.1,244.9 L935.3,244.1 L936.9,246.0 L938.9,247.4 L940.5,249.2 L942.8,250.2 L944.2,252.2 L946.9,252.8 L948.7,254.5 L950.3,256.3 L952.5,257.3 L954.9,257.9 L956.9,259.4 L959.3,260.3 L961.6,261.0 L963.9,261.5 L966.1,262.5 L968.5,262.5 L970.9,262.6 L973.1,263.2 L975.3,264.4 L977.6,264.9 L980.0,264.8 L982.2,264.4 L984.4,265.5 L986.7,265.7 L988.9,265.1 L991.1,265.3 L993.4,264.8 L995.6,265.4 L997.8,265.4 L1000.0,265.6 L1002.3,264.8 L1004.5,266.3 L1006.7,265.7 L1009.0,265.6 L1011.2,266.3 L1013.4,266.0 L1015.6,265.9 L1017.9,266.3 L1020.1,265.4 L1022.3,266.2 L1024.6,266.1 L1026.8,267.0 L1029.0,267.0 L1031.3,266.1 L1033.5,266.5 L1035.7,266.6 L1037.6,264.9 L1040.0,264.0 L1042.5,263.3 L1044.7,262.1 L1046.6,260.3 L1048.8,259.1 L1051.6,258.2 L1054.4,257.4 L1057.3,257.3 L1058.6,259.3 L1060.1,261.0 L1063.0,261.2 L1065.7,260.1 L1067.3,261.9 L1067.6,264.4 L1069.7,265.9 L1070.7,268.1 L1071.4,270.4 L1073.9,271.2 L1076.0,273.0 L1078.6,273.7 L1080.8,275.1 L1082.1,277.1 L1082.8,279.5 L1084.5,281.3 L1084.8,283.8 L1086.7,285.6 L1087.2,288.0 L1088.3,290.1 L1090.8,289.7 L1093.3,289.6 L1095.8,290.1 L1097.7,291.6 L1099.6,293.0 L1101.6,294.5 L1103.4,296.0 L1105.2,297.6 L1106.8,299.5 L1108.8,301.0 L1110.3,303.0 L1111.4,305.3 L1113.0,307.2 L1114.8,308.9 L1116.4,310.8 L1117.9,312.8 L1120.1,314.1 L1121.7,316.0 L1124.2,316.9 L1125.6,319.1 L1127.4,320.8 L1129.6,322.0 L1129.9,324.4 L1131.6,326.3 L1132.4,328.6 L1132.4,331.1 L1134.3,332.9 L1134.0,335.6 L1135.0,337.7 L1136.9,339.5 L1137.7,341.8 L1137.8,344.3 L1139.0,346.4 L1139.6,348.6 L1140.1,350.8 L1139.3,353.2 L1140.2,355.4 L1139.9,357.7 L1141.1,359.9 L1141.0,362.2 L1140.8,364.5 L1142.1,366.6 L1142.1,368.9 L1141.6,371.3 L1141.6,373.6 L1141.7,375.8 L1142.7,378.0 L1143.7,380.1 L1143.6,382.4 L1143.6,384.7 L1144.4,386.8 L1144.6,389.1 L1145.7,391.2 L1146.3,393.3 L1146.7,395.6 L1147.3,397.8 L1147.0,400.1 L1147.4,402.3 L1147.9,404.5 L1148.2,406.7 L1149.3,408.7 L1149.7,410.9 L1150.1,413.1 L1149.6,415.5 L1149.8,417.7 L1150.3,419.8 L1152.0,421.8 L1152.5,423.9 L1151.6,426.4 L1152.8,428.4 L1152.8,430.7 L1153.6,432.8 L1154.5,434.9 L1154.9,437.2 L1155.5,439.4 L1156.3,441.5 L1156.7,443.8 L1158.2,445.7 L1157.9,448.2 L1158.3,450.4 L1159.9,452.3 L1160.2,454.6 L1160.4,456.9 L1161.4,459.0 L1162.4,461.1 L1163.6,463.2 L1164.5,465.3 L1164.9,467.7 L1166.5,469.6 L1166.1,472.3 L1167.1,474.4 L1168.1,476.5 L1169.3,478.6 L1169.7,480.9 L1171.0,482.9 L1172.2,484.8 L1172.8,487.0 L1173.9,489.1 L1174.1,491.4 L1175.3,493.4 L1177.0,495.2 L1177.0,497.7 L1178.1,499.7 L1179.4,501.6 L1180.6,503.8 L1182.2,505.8 L1184.2,507.4 L1185.2,509.8 L1186.8,511.7 L1188.6,513.5 L1190.4,515.3 L1191.7,517.3 L1193.2,519.1 L1195.2,520.5 L1196.4,522.6 L1198.7,523.7 L1199.9,525.7 L1201.3,527.6 L1203.5,528.8 L1206.1,529.4 L1208.0,531.1 L1210.0,532.7 L1212.3,533.8 L1214.5,534.7 L1217.0,534.8 L1219.0,536.5 L1221.4,536.8 L1223.8,537.0 L1226.0,537.9 L1228.3,538.4 L1230.6,538.5 L1232.9,538.7 L1235.2,538.8 L1237.4,539.9 L1239.7,539.6 L1242.0,540.0 L1244.3,540.3 L1246.6,540.2 L1248.9,541.0 L1251.2,539.7 L1253.5,540.7 L1255.7,541.0 L1258.1,540.4 L1260.3,540.8 L1262.7,540.4 L1264.9,540.7 L1267.2,541.3 L1271.3,542.0 L1273.5,540.2 L1275.5,538.3 L1278.1,537.2 L1280.1,535.5 L1282.8,535.0 L1284.7,533.2 L1286.9,531.8 L1289.1,530.4 L1291.5,531.3 L1293.9,530.8 L1296.2,531.6 L1298.7,531.3 L1301.1,531.7 L1303.5,530.7 L1305.9,531.7 L1308.3,531.7 L1310.7,532.4 L1313.3,531.6 L1315.7,533.2 L1318.3,532.3 L1320.7,533.1 L1322.0,531.0 L1323.0,528.7 L1324.8,526.9 L1327.1,525.8 L1329.4,524.8 L1331.6,523.5" stroke="#2e8ce6"/>
  </g>
  <!-- arrows -->
  <g stroke="#000" stroke-width="1.4" fill="#000">
    <path d="M201,598 L201,612" fill="none"/>
    <path d="M196,608 L201,617.5 L206,608 L201,611 Z" stroke-width="0.8"/>
    <path d="M216,573.5 L207,573.5" fill="none"/>
    <path d="M196,568 L201,577.5 L206,568 L201,571 Z" stroke-width="0.8"/>
    <path d="M211,568.5 L203,573.5 L211,578 L208,573.5 Z" stroke-width="0.8"/>
  </g>
</svg>

<div class="t ax" style="left:172px;top:213px;letter-spacing:0.8px">250</div>
<div class="t ax" style="left:172px;top:287px;letter-spacing:0.8px">200</div>
<div class="t ax" style="left:172px;top:361px;letter-spacing:0.8px">150</div>
<div class="t ax" style="left:172px;top:434px;letter-spacing:0.8px">100</div>
<div class="t ax" style="left:179px;top:508px;letter-spacing:0.8px">50</div>
<div class="t" style="left:139px;top:381px;width:36px;font-size:12px;line-height:12px;transform:rotate(-90deg);transform-origin:18px 6px">温度:C</div>

<div class="t ax" style="left:151.4px;width:100px;text-align:center;top:581px;letter-spacing:1.7px">00:00:00</div>
<div class="t ax" style="left:408.7px;width:100px;text-align:center;top:581px;letter-spacing:1.7px">00:05:00</div>
<div class="t ax" style="left:665.9px;width:100px;text-align:center;top:581px;letter-spacing:1.7px">00:10:00</div>
<div class="t ax" style="left:923.1px;width:100px;text-align:center;top:581px;letter-spacing:1.7px">00:15:00</div>
<div class="t ax" style="left:1180.3px;width:100px;text-align:center;top:581px;letter-spacing:1.7px">00:20:00</div>
<div class="t" style="left:735px;top:595px;font-size:12px;line-height:12px">时间<span style="font-family:'Liberation Mono',monospace;font-size:10px">:H:M:S</span></div>
<div class="t ax" style="left:416.3px;width:80px;text-align:center;top:621px;letter-spacing:1px">5</div>
<div class="t ax" style="left:673.6px;width:80px;text-align:center;top:621px;letter-spacing:1px">10</div>
<div class="t ax" style="left:930.8px;width:80px;text-align:center;top:621px;letter-spacing:1px">15</div>
<div class="t ax" style="left:1188.0px;width:80px;text-align:center;top:621px;letter-spacing:1px">20</div>
<div class="t" style="left:748px;top:635px;font-size:12px;line-height:12px">距离<span style="font-family:'Liberation Mono',monospace;font-size:10px">:M</span></div>

<div class="t" style="left:752px;top:523px;font-size:12px;line-height:12px">波段1</div>
<div class="t" style="left:278px;top:209px;font-family:'Liberation Serif',serif;font-size:15px;line-height:15px;color:#111">PWI: 5012%</div>
<div class="t" style="left:636px;top:334px;font-family:'Liberation Serif',serif;font-size:31px;line-height:32px;color:#c08cc8"><span style="letter-spacing:3px">天晟涂装线</span><span style="font-family:'Liberation Mono',monospace;font-size:30px">.tpsd</span></div>

<div class="a" style="left:174px;top:186px;width:53px;height:23px;background:#eef0f4;border:1.5px solid #1c1c8e"></div>
<div class="t" style="left:177px;top:189px;font-family:'Liberation Serif',serif;font-size:14.5px;line-height:15px;color:#111;transform:scaleX(0.92);transform-origin:0 0">00:00:00</div>
<div class="a" style="left:189px;top:618px;width:23px;height:22px;background:#eef0f4;border:1.5px solid #1c1c8e"></div>
<div class="t" style="left:191px;top:621px;font-family:'Liberation Serif',serif;font-size:14.5px;line-height:15px;color:#111">0.0</div>
<div class="a" style="left:1317px;top:563px;width:30px;height:22px;background:#eef0f4;border:1.5px solid #1c1c8e;border-right:none"></div>
<div class="t" style="left:1320px;top:566px;font-family:'Liberation Serif',serif;font-size:14.5px;line-height:15px;color:#111">10.5</div>

<!-- right toolbar -->
<div class="a" style="left:1360px;top:134px;width:71px;height:519px;border:1px solid #8a8f98;background:#fff"></div>
<svg class="a" style="left:1360px;top:134px" width="71" height="400" viewBox="1360 134 71 400" fill="none" stroke="#2f6ad6" stroke-width="1.7">
  <path d="M1396,166.9 L1410.9,166.9 L1410.9,140.9 L1380,140.9 L1380,167.8 L1391.2,159 L1394.9,161.8 L1400.9,157.1"/>
  <circle cx="1403.5" cy="153.4" r="2.9"/>
  <path d="M1396,166.9 L1396,172.4 M1383.3,172.4 L1407.9,172.4"/>
  <g transform="translate(0,0)">
  <path d="M1411.4,212.4 L1411.4,198.3 L1381,198.3 L1381,229.1 L1392.6,229.1"/>
  <path d="M1381,210.8 L1411.4,210.8 M1382,204.5 L1400.7,204.5"/>
  <path d="M1382,216.8 L1388,216.8 M1391.2,216.8 L1396.7,216.8 M1400,216.8 L1401.2,216.8"/>
  <path d="M1400.5,217 L1411.5,220.5 L1407.5,223.5 L1404.5,228.8 Z" fill="#2563d8" stroke="none"/>
  <path d="M1406,223.5 L1411.5,228.7" stroke-width="1.8"/>
</g>
  <g transform="translate(0,0)">
  <path d="M1411.4,270.6 L1411.4,256.3 L1381,256.3 L1381,287.1 L1392.3,287.1 L1392.3,256.3 M1386.2,256.3 L1386.2,275.5"/>
  <path d="M1398.1,256.3 L1398.1,263 M1398.1,266.2 L1398.1,271.6 M1398.1,274.5 L1398.1,275.8"/>
  <path d="M1400.5,275.2 L1411.5,278.7 L1407.5,281.7 L1404.5,287 Z" fill="#2563d8" stroke="none"/>
  <path d="M1406,281.7 L1411.5,286.9" stroke-width="1.8"/>
</g>
  <g transform="translate(0,58)">
  <path d="M1411.4,270.6 L1411.4,256.3 L1381,256.3 L1381,287.1 L1392.3,287.1 L1392.3,256.3 M1386.2,256.3 L1386.2,275.5"/>
  <path d="M1398.1,256.3 L1398.1,263 M1398.1,266.2 L1398.1,271.6 M1398.1,274.5 L1398.1,275.8"/>
  <path d="M1400.5,275.2 L1411.5,278.7 L1407.5,281.7 L1404.5,287 Z" fill="#2563d8" stroke="none"/>
  <path d="M1406,281.7 L1411.5,286.9" stroke-width="1.8"/>
</g>
  <g transform="translate(0,174)">
  <path d="M1411.4,212.4 L1411.4,198.3 L1381,198.3 L1381,229.1 L1392.6,229.1"/>
  <path d="M1381,210.8 L1411.4,210.8 M1382,204.5 L1400.7,204.5"/>
  <path d="M1382,216.8 L1388,216.8 M1391.2,216.8 L1396.7,216.8 M1400,216.8 L1401.2,216.8"/>
  <path d="M1400.5,217 L1411.5,220.5 L1407.5,223.5 L1404.5,228.8 Z" fill="#2563d8" stroke="none"/>
  <path d="M1406,223.5 L1411.5,228.7" stroke-width="1.8"/>
</g>
  <g transform="translate(0,290)">
  <path d="M1411.4,212.4 L1411.4,198.3 L1381,198.3 L1381,229.1 L1392.6,229.1"/>
  <path d="M1381,210.8 L1411.4,210.8 M1382,204.5 L1400.7,204.5"/>
  <path d="M1382,216.8 L1388,216.8 M1391.2,216.8 L1396.7,216.8 M1400,216.8 L1401.2,216.8"/>
  <path d="M1400.5,217 L1411.5,220.5 L1407.5,223.5 L1404.5,228.8 Z" fill="#2563d8" stroke="none"/>
  <path d="M1406,223.5 L1411.5,228.7" stroke-width="1.8"/>
</g>
  <circle cx="1395" cy="443.5" r="16" fill="#d5d9de" stroke="none"/>
  <path d="M1386.5,443.6 L1393.4,446.8 L1403.2,438.8 L1393.6,449 Z" fill="#8a8e94" stroke="none"/>
</svg>
<div class="rt" style="top:178px">标定起点</div>
<div class="rt" style="top:236px">辅助线</div>
<div class="rt" style="top:294px">移动曲线</div>
<div class="rt" style="top:352px">重置曲线</div>
<div class="rt" style="top:410px">显示温区</div>
<div class="rt" style="top:466px">显示警报</div>
<div class="rt" style="top:526px">刷新</div>

<!-- port list -->
<div class="a" style="left:1434px;top:154px;width:182px;height:499px;background:#fff;box-shadow:0 0 2px #f0f0f0"></div>
<div class="pn" style="top:158px">1</div><div class="pn" style="top:180px">2</div><div class="pn" style="top:202px">3</div><div class="pn" style="top:224px">4</div><div class="pn" style="top:246px">5</div><div class="pn" style="top:268px">6</div>
<div class="pp" style="top:158px">Port1</div><div class="pp" style="top:180px">Port2</div><div class="pp" style="top:202px">Port3</div><div class="pp" style="top:224px">Port4</div><div class="pp" style="top:246px">Port5</div><div class="pp" style="top:268px">Port6</div>
<svg class="a" style="left:1460px;top:150px" width="160" height="135" viewBox="1460 150 160 135" fill="none" stroke-width="1.5">
  <g stroke="#e020e0"><path d="M1464,164.5 L1468,164.5 M1481,164.5 L1485,164.5"/><circle cx="1474.5" cy="164.5" r="5.5"/></g>
  <g stroke="#c2f07a"><path d="M1464,186.5 L1468,186.5 M1481,186.5 L1485,186.5"/><circle cx="1474.5" cy="186.5" r="5.5"/></g>
  <g stroke="#1f8a1f"><path d="M1464,208.5 L1468,208.5 M1481,208.5 L1485,208.5"/><circle cx="1474.5" cy="208.5" r="5.5"/></g>
  <g stroke="#1f8585"><path d="M1464,230.5 L1468,230.5 M1481,230.5 L1485,230.5"/><circle cx="1474.5" cy="230.5" r="5.5"/></g>
  <g stroke="#2e8ce6"><path d="M1464,252.5 L1468,252.5 M1481,252.5 L1485,252.5"/><circle cx="1474.5" cy="252.5" r="5.5"/></g>
  <g stroke="#40e040"><path d="M1464,274.5 L1468,274.5 M1481,274.5 L1485,274.5"/><circle cx="1474.5" cy="274.5" r="5.5"/></g>
  <g fill="#7eaef0" stroke="none">
    <path d="M1597,164.5 Q1605,157 1613,164.5 Q1605,172 1597,164.5Z"/>
    <path d="M1597,186.5 Q1605,179 1613,186.5 Q1605,194 1597,186.5Z"/>
    <path d="M1597,208.5 Q1605,201 1613,208.5 Q1605,216 1597,208.5Z"/>
    <path d="M1597,230.5 Q1605,223 1613,230.5 Q1605,238 1597,230.5Z"/>
    <path d="M1597,252.5 Q1605,245 1613,252.5 Q1605,260 1597,252.5Z"/>
  </g>
  <g fill="#fff" stroke="none"><circle cx="1605" cy="164.5" r="2.8"/><circle cx="1605" cy="186.5" r="2.8"/><circle cx="1605" cy="208.5" r="2.8"/><circle cx="1605" cy="230.5" r="2.8"/><circle cx="1605" cy="252.5" r="2.8"/></g>
  <g fill="#7eaef0" stroke="none"><circle cx="1605" cy="164.5" r="1.5"/><circle cx="1605" cy="186.5" r="1.5"/><circle cx="1605" cy="208.5" r="1.5"/><circle cx="1605" cy="230.5" r="1.5"/><circle cx="1605" cy="252.5" r="1.5"/></g>
  <path d="M1598,274.5 Q1605,268 1612,274.5 Q1605,281 1598,274.5Z M1602,280 L1608,269" stroke="#d8a8e0" stroke-width="1.4"/>
</svg>

<!-- bottom tabs -->
<div class="a" style="left:139px;top:683px;width:1234px;height:1px;background:#8e949c"></div>
<div class="a" style="left:194px;top:667px;width:71px;height:17px;background:linear-gradient(#fafafa,#d9d9d9);border:1px solid #a0a0a0;border-bottom:none"></div>
<div class="a" style="left:265px;top:667px;width:84px;height:17px;background:linear-gradient(#fafafa,#d9d9d9);border:1px solid #a0a0a0;border-bottom:none"></div>
<div class="a" style="left:349px;top:667px;width:81px;height:17px;background:linear-gradient(#fafafa,#d9d9d9);border:1px solid #a0a0a0;border-bottom:none"></div>
<div class="t" style="left:205px;top:669px;font-size:12px;line-height:12px">设备信息</div>
<div class="t" style="left:277px;top:669px;font-size:12px;line-height:12px">竖截线结果</div>
<div class="t" style="left:361px;top:669px;font-size:12px;line-height:12px">横截线结果</div>

<div class="a" style="left:139px;top:683px;width:1234px;height:251px;background:#fff;border:1px solid #8a8a8a"></div>
<table class="g">
<tr><td rowspan="2" class="l" style="width:39px">序号</td><td rowspan="2" class="l" style="width:100px">通道名称</td><td style="width:100px">上升时间(S)</td><td style="width:100px">以上时间(S)</td><td style="width:100px">温度之间时间(S)</td></tr>
<tr style="letter-spacing:0.6px"><td>30 -&gt; 200 (C)</td><td>200 (C)</td><td>50 -&gt; 100 (C)</td></tr>
<tr><td class="l">1</td><td class="l">通道 1</td><td>00:05:08</td><td>00:13:37</td><td>00:21:48</td></tr>
<tr><td class="l">2</td><td class="l">通道 2</td><td>00:05:36</td><td>00:12:43</td><td>00:00:42</td></tr>
<tr><td class="l">3</td><td class="l">通道 3</td><td>00:05:07</td><td>00:12:35</td><td>00:02:37</td></tr>
<tr><td class="l">4</td><td class="l">通道 4</td><td>00:03:06</td><td>00:15:01</td><td>-</td></tr>
<tr><td class="l">5</td><td class="l">通道 5</td><td>00:04:21</td><td>00:13:04</td><td>-</td></tr>
</table>
<div class="a" style="left:141px;top:685px;width:1230px;height:246px;border:1px solid #8a8a8a"></div>
<div class="a" style="left:139px;top:664px;width:56px;height:21px;background:#fff;border:1px solid #a0a0a0;border-bottom:none"></div>
<div class="t" style="left:150px;top:669px;font-size:12px;line-height:12px">波段<span style="font-family:'Liberation Mono',monospace;font-size:11px">1</span></div>

<!-- device image -->
<svg class="a" style="left:1377px;top:688px" width="240" height="245" viewBox="1377 688 240 245">
  <defs>
    <filter id="nz" x="0" y="0" width="100%" height="100%">
      <feTurbulence type="fractalNoise" baseFrequency="0.9" numOctaves="1" seed="3" result="n"/>
      <feColorMatrix in="n" type="matrix" values="0 0 0 0 0.55  0 0 0 0 0.75  0 0 0 0 1  0 0 0 1.3 -0.75" result="c"/>
      <feComposite in="c" in2="SourceGraphic" operator="in"/>
    </filter>
  </defs>
  <rect x="1377.5" y="688.5" width="239" height="244" fill="#fff" stroke="#111" stroke-width="1"/>
  <rect x="1378" y="689" width="238.5" height="182" fill="#1e72ee"/>
  <rect x="1378" y="689" width="238.5" height="182" fill="#fff" filter="url(#nz)" opacity="0.75"/>
  <!-- left labels -->
  <g fill="#eef4ff">
    <rect x="1392" y="722" width="4" height="8"/><rect x="1397" y="723" width="6" height="7" fill="none" stroke="#eef4ff" stroke-width="1.2"/>
    <rect x="1391" y="745" width="13" height="9" rx="2"/>
    <rect x="1392" y="769" width="3" height="9"/><rect x="1396" y="773" width="4" height="5"/>
    <rect x="1391" y="792" width="13" height="10" rx="2"/>
  </g>
  <g fill="#5a3a8a">
    <ellipse cx="1412" cy="726" rx="2.2" ry="3.5"/><ellipse cx="1412" cy="750" rx="2.2" ry="3.5"/>
    <ellipse cx="1412" cy="774" rx="2.2" ry="3.5"/><ellipse cx="1412" cy="797" rx="2.2" ry="3.5"/>
  </g>
  <!-- logo -->
  <g fill="#cfe0ff">
    <rect x="1434" y="752" width="8" height="1.6"/><rect x="1434" y="756" width="8" height="1.6"/><rect x="1434" y="760" width="8" height="1.6"/><rect x="1434" y="764" width="8" height="1.6"/><rect x="1434" y="768" width="8" height="1.6"/><rect x="1434" y="772" width="8" height="1.6"/>
    <rect x="1469" y="752" width="9" height="1.6"/><rect x="1469" y="756" width="9" height="1.6"/><rect x="1469" y="760" width="9" height="1.6"/><rect x="1469" y="764" width="9" height="1.6"/><rect x="1469" y="768" width="9" height="1.6"/><rect x="1469" y="772" width="9" height="1.6"/>
  </g>
  <text x="1440" y="774" font-family="Liberation Sans" font-weight="bold" font-style="italic" font-size="22" fill="#fff" textLength="30" lengthAdjust="spacingAndGlyphs">RSM</text>
  <text x="1483" y="774" font-family="Liberation Sans" font-weight="bold" font-size="22" fill="#fff" textLength="78" lengthAdjust="spacingAndGlyphs">- S60K-W</text>
  <text x="1578" y="796" font-family="Liberation Sans" font-size="10" fill="#b08050">5</text>
  <!-- right digits -->
  <g fill="#e8f0ff" font-family="Liberation Sans" font-size="9" font-weight="bold">
    <text x="1606" y="726">10</text><text x="1606" y="750">10</text><text x="1606" y="795">10</text><text x="1606" y="819">15</text><text x="1606" y="843">15</text>
  </g>
  <circle cx="1616" cy="771" r="9" fill="#2ee02e"/>
  <circle cx="1616" cy="805" r="9" fill="#167016"/>
  <!-- triangle logo -->
  <path d="M1397,823 L1388,850 L1407,850 Z" fill="none" stroke="#fff" stroke-width="2"/>
  <path d="M1391,850 Q1396,838 1403,835" stroke="#fff" stroke-width="1.5" fill="none"/>
  <rect x="1387" y="858" width="22" height="4" fill="#dfe8ff"/>
  <!-- buttons -->
  <circle cx="1439" cy="829" r="10" fill="#0c3c9a"/><circle cx="1439" cy="829" r="8.5" fill="none" stroke="#3ad0f0" stroke-width="1.5"/><ellipse cx="1439" cy="829" rx="5" ry="6.5" fill="#d6a8d0"/>
  <circle cx="1469" cy="829" r="10" fill="#0c3c9a"/><circle cx="1469" cy="829" r="8.5" fill="none" stroke="#3ad0f0" stroke-width="1.5"/><ellipse cx="1469" cy="829" rx="5" ry="6.5" fill="#c8a0d8"/>
  <path d="M1436,852 A4,4 0 1 0 1442,852 M1439,849 L1439,855" stroke="#fff" stroke-width="1.2" fill="none"/>
  <rect x="1461" y="853" width="16" height="8" fill="#e0e8ff"/>
  <text x="1482" y="837" font-family="Liberation Serif" font-size="13" fill="#d8e4ff" textLength="27" lengthAdjust="spacingAndGlyphs">RSMC</text>
  <text x="1518" y="827" font-family="Liberation Sans" font-weight="bold" font-size="8" fill="#eef4ff" textLength="83" lengthAdjust="spacingAndGlyphs">Temperature Curve Analyzer</text>
  <text x="1518" y="838" font-family="Liberation Sans" font-weight="bold" font-size="5.5" fill="#dbe6ff" textLength="66" lengthAdjust="spacingAndGlyphs">SHENZHEN RSM TECHNOLOGY CO LTD</text>
</svg>
<div class="t" style="left:1430px;top:897px;font-family:'Liberation Serif',serif;font-size:17px;line-height:18px;color:#000;font-weight:bold;transform:scaleX(0.89);transform-origin:0 0">RSM 温度分析系统</div>

</body></html>
